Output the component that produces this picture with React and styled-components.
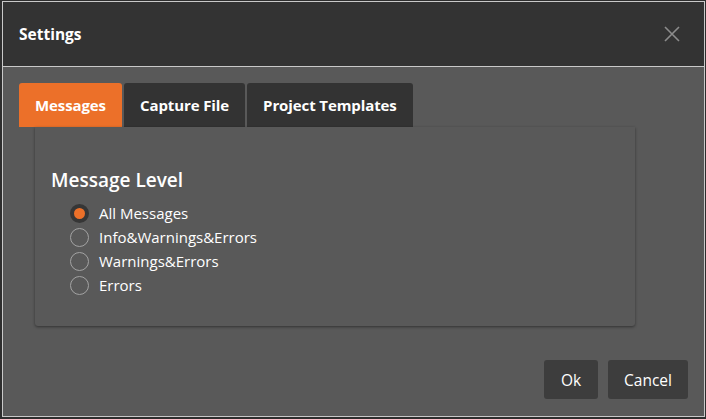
import React, { useState } from "react";
import styled, { createGlobalStyle } from "styled-components";

const GlobalStyle = createGlobalStyle`
    html, body {
        margin: 0;
        padding: 0;
        background: #2e2e2e;
        font-family: "Open Sans", "Noto Sans", "Liberation Sans", sans-serif;
    }
    * { box-sizing: border-box; }
`;

const Page = styled.div`
    width: 706px;
    height: 419px;
    padding: 1px 1px 2px 2px;
`;

const Dialog = styled.div`
    width: 703px;
    height: 416px;
    border: 1px solid #c9c9c9;
    background: #595959;
    display: flex;
    flex-direction: column;
`;

const Header = styled.div`
    height: 65px;
    flex-shrink: 0;
    background: #333333;
    border-bottom: 1px solid #c9c9c9;
    display: flex;
    align-items: center;
    justify-content: space-between;
    padding: 0 23px 0 16px;
`;

const Title = styled.h1`
    margin: 0;
    font-size: 15.5px;
    font-weight: 700;
    color: #ffffff;
`;

const CloseButton = styled.button`
    width: 18px;
    height: 18px;
    padding: 0;
    border: none;
    background: none;
    display: flex;
    align-items: center;
    justify-content: center;
    cursor: pointer;
`;

const Body = styled.div`
    flex: 1;
    display: flex;
    flex-direction: column;
    padding: 16px 16px 17px 16px;
`;

const TabBar = styled.div`
    display: flex;
    gap: 2px;
    height: 44px;
`;

const Tab = styled.button`
    border: none;
    border-radius: 3px 3px 0 0;
    padding: 0 16px;
    background: ${({ $active }) => ($active ? "#ec7029" : "#333333")};
    color: #ffffff;
    font-family: inherit;
    font-size: 15px;
    font-weight: 700;
    letter-spacing: -0.1px;
    cursor: pointer;
`;

const Panel = styled.div`
    margin: 0 53px 0 16px;
    height: 199px;
    border-radius: 0 0 3px 3px;
    background: #595959;
    box-shadow: 0 1px 3px rgba(0, 0, 0, 0.45);
    padding: 40px 16px 0 16px;
`;

const Legend = styled.h2`
    margin: 0 0 8px 0;
    font-size: 19px;
    font-weight: 600;
    line-height: 26px;
    color: #ffffff;
`;

const RadioList = styled.div`
    display: flex;
    flex-direction: column;
    padding-left: 19px;
`;

const RadioRow = styled.label`
    height: 24px;
    display: flex;
    align-items: center;
    gap: 10px;
    cursor: pointer;
`;

const RadioCircle = styled.span`
    width: 19px;
    height: 19px;
    border-radius: 50%;
    flex-shrink: 0;
    border: ${({ $checked }) =>
        $checked ? "4px solid #363636" : "1.5px solid #a3a3a3"};
    background: ${({ $checked }) => ($checked ? "#ec7029" : "transparent")};
`;

const RadioLabel = styled.span`
    font-size: 15px;
    color: #ffffff;
`;

const Footer = styled.div`
    margin-top: auto;
    display: flex;
    justify-content: flex-end;
    gap: 10px;
`;

const Button = styled.button`
    height: 39px;
    min-width: ${({ $wide }) => ($wide ? 80 : 54)}px;
    padding: 0 16px;
    border: none;
    border-radius: 3px;
    background: #3d3d3d;
    color: #ffffff;
    font-family: inherit;
    font-size: 15.5px;
    cursor: pointer;
`;

const levels = [
    "All Messages",
    "Info&Warnings&Errors",
    "Warnings&Errors",
    "Errors",
];

const tabs = ["Messages", "Capture File", "Project Templates"];

const App = () => {
    const [tab, setTab] = useState(0);
    const [level, setLevel] = useState(0);

    return (
        <Page>
            <GlobalStyle />
            <Dialog>
                <Header>
                    <Title>Settings</Title>
                    <CloseButton aria-label="Close">
                        <svg width="16" height="16" viewBox="0 0 16 16">
                            <path
                                d="M1 1L15 15M15 1L1 15"
                                stroke="#8c8c8c"
                                strokeWidth="1.6"
                            />
                        </svg>
                    </CloseButton>
                </Header>
                <Body>
                    <TabBar>
                        {tabs.map((t, i) => (
                            <Tab
                                key={t}
                                $active={i === tab}
                                onClick={() => setTab(i)}
                            >
                                {t}
                            </Tab>
                        ))}
                    </TabBar>
                    <Panel>
                        <Legend>Message Level</Legend>
                        <RadioList>
                            {levels.map((l, i) => (
                                <RadioRow key={l} onClick={() => setLevel(i)}>
                                    <RadioCircle $checked={i === level} />
                                    <RadioLabel>{l}</RadioLabel>
                                </RadioRow>
                            ))}
                        </RadioList>
                    </Panel>
                    <Footer>
                        <Button>Ok</Button>
                        <Button $wide>Cancel</Button>
                    </Footer>
                </Body>
            </Dialog>
        </Page>
    );
};

export default App;
